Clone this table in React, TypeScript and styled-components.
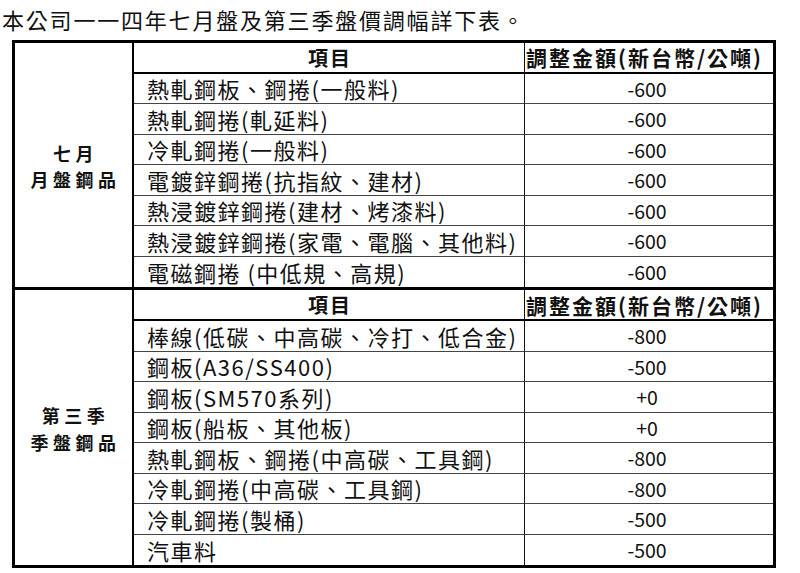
import styled, { createGlobalStyle } from "styled-components";

interface IRow {
  item: string;
  amount: string;
}

interface ISection {
  label: string[];
  rows: IRow[];
}

const sections: ISection[] = [
  {
    label: ["七月", "月盤鋼品"],
    rows: [
      { item: "熱軋鋼板、鋼捲(一般料)", amount: "-600" },
      { item: "熱軋鋼捲(軋延料)", amount: "-600" },
      { item: "冷軋鋼捲(一般料)", amount: "-600" },
      { item: "電鍍鋅鋼捲(抗指紋、建材)", amount: "-600" },
      { item: "熱浸鍍鋅鋼捲(建材、烤漆料)", amount: "-600" },
      { item: "熱浸鍍鋅鋼捲(家電、電腦、其他料)", amount: "-600" },
      { item: "電磁鋼捲 (中低規、高規)", amount: "-600" },
    ],
  },
  {
    label: ["第三季", "季盤鋼品"],
    rows: [
      { item: "棒線(低碳、中高碳、冷打、低合金)", amount: "-800" },
      { item: "鋼板(A36/SS400)", amount: "-500" },
      { item: "鋼板(SM570系列)", amount: "+0" },
      { item: "鋼板(船板、其他板)", amount: "+0" },
      { item: "熱軋鋼板、鋼捲(中高碳、工具鋼)", amount: "-800" },
      { item: "冷軋鋼捲(中高碳、工具鋼)", amount: "-800" },
      { item: "冷軋鋼捲(製桶)", amount: "-500" },
      { item: "汽車料", amount: "-500" },
    ],
  },
];

const GlobalStyle = createGlobalStyle`
  * { box-sizing: border-box; }
  body {
    margin: 0;
    background: #fff;
    color: #111;
    font-family: "Noto Sans CJK TC", "Noto Sans", sans-serif;
  }
`;

export default function App() {
  return (
    <>
      <GlobalStyle />
      <Title>本公司一一四年七月盤及第三季盤價調幅詳下表。</Title>
      <Table>
        {sections.map((section) => (
          <Section key={section.label.join("")} $rows={section.rows.length}>
            <Label $span={section.rows.length + 1}>
              {section.label.map((line) => (
                <LabelLine key={line}>{line}</LabelLine>
              ))}
            </Label>
            <ItemHead>項目</ItemHead>
            <AmountHead>調整金額(新台幣/公噸)</AmountHead>
            {section.rows.map((row, i) => {
              const last = i === section.rows.length - 1;
              return (
                <Row key={row.item}>
                  <ItemCell $last={last}>{row.item}</ItemCell>
                  <AmountCell $last={last}>{row.amount}</AmountCell>
                </Row>
              );
            })}
          </Section>
        ))}
      </Table>
    </>
  );
}

const Title = styled.div`
  height: 39.5px;
  line-height: 39.5px;
  padding-left: 2px;
  font-size: 22px;
  letter-spacing: 1.8px;
  white-space: nowrap;
`;

const Table = styled.div`
  margin-left: 12px;
  width: 764px;
  border: 3px solid #000;
`;

const Section = styled.div<{ $rows: number }>`
  display: grid;
  grid-template-columns: 119px 391px 1fr;
  grid-template-rows: 31px repeat(${(p) => p.$rows}, 30.5px);

  & + & {
    border-top: 3px solid #000;
  }
`;

const Label = styled.div<{ $span: number }>`
  grid-column: 1;
  grid-row: 1 / span ${(p) => p.$span};
  border-right: 2px solid #000;
  display: flex;
  flex-direction: column;
  align-items: center;
  justify-content: center;
  padding: 2px 0 0 4px;
`;

const LabelLine = styled.div`
  font-size: 18px;
  font-weight: 700;
  letter-spacing: 4.5px;
  line-height: 26.2px;
`;

const ItemHead = styled.div`
  grid-column: 2;
  border-bottom: 2px solid #000;
  border-right: 1.5px solid #111;
  display: flex;
  align-items: center;
  justify-content: center;
  font-size: 20px;
  font-weight: 700;
  letter-spacing: 2px;
  padding-left: 2px;
`;

const AmountHead = styled.div`
  grid-column: 3;
  border-bottom: 2px solid #000;
  display: flex;
  align-items: center;
  padding-left: 1px;
  font-size: 21px;
  font-weight: 700;
  letter-spacing: 2px;
  white-space: nowrap;
`;

const Row = styled.div`
  display: contents;
`;

const ItemCell = styled.div<{ $last: boolean }>`
  grid-column: 2;
  border-right: 1.5px solid #111;
  border-bottom: ${(p) => (p.$last ? "none" : "1px solid #444")};
  display: flex;
  align-items: center;
  padding-left: 13px;
  font-size: 22px;
  letter-spacing: 1.5px;
  white-space: nowrap;
  overflow: hidden;
`;

const AmountCell = styled.div<{ $last: boolean }>`
  grid-column: 3;
  border-bottom: ${(p) => (p.$last ? "none" : "1px solid #444")};
  display: flex;
  align-items: center;
  justify-content: center;
  font-size: 19.5px;
  padding-right: 4px;
`;
